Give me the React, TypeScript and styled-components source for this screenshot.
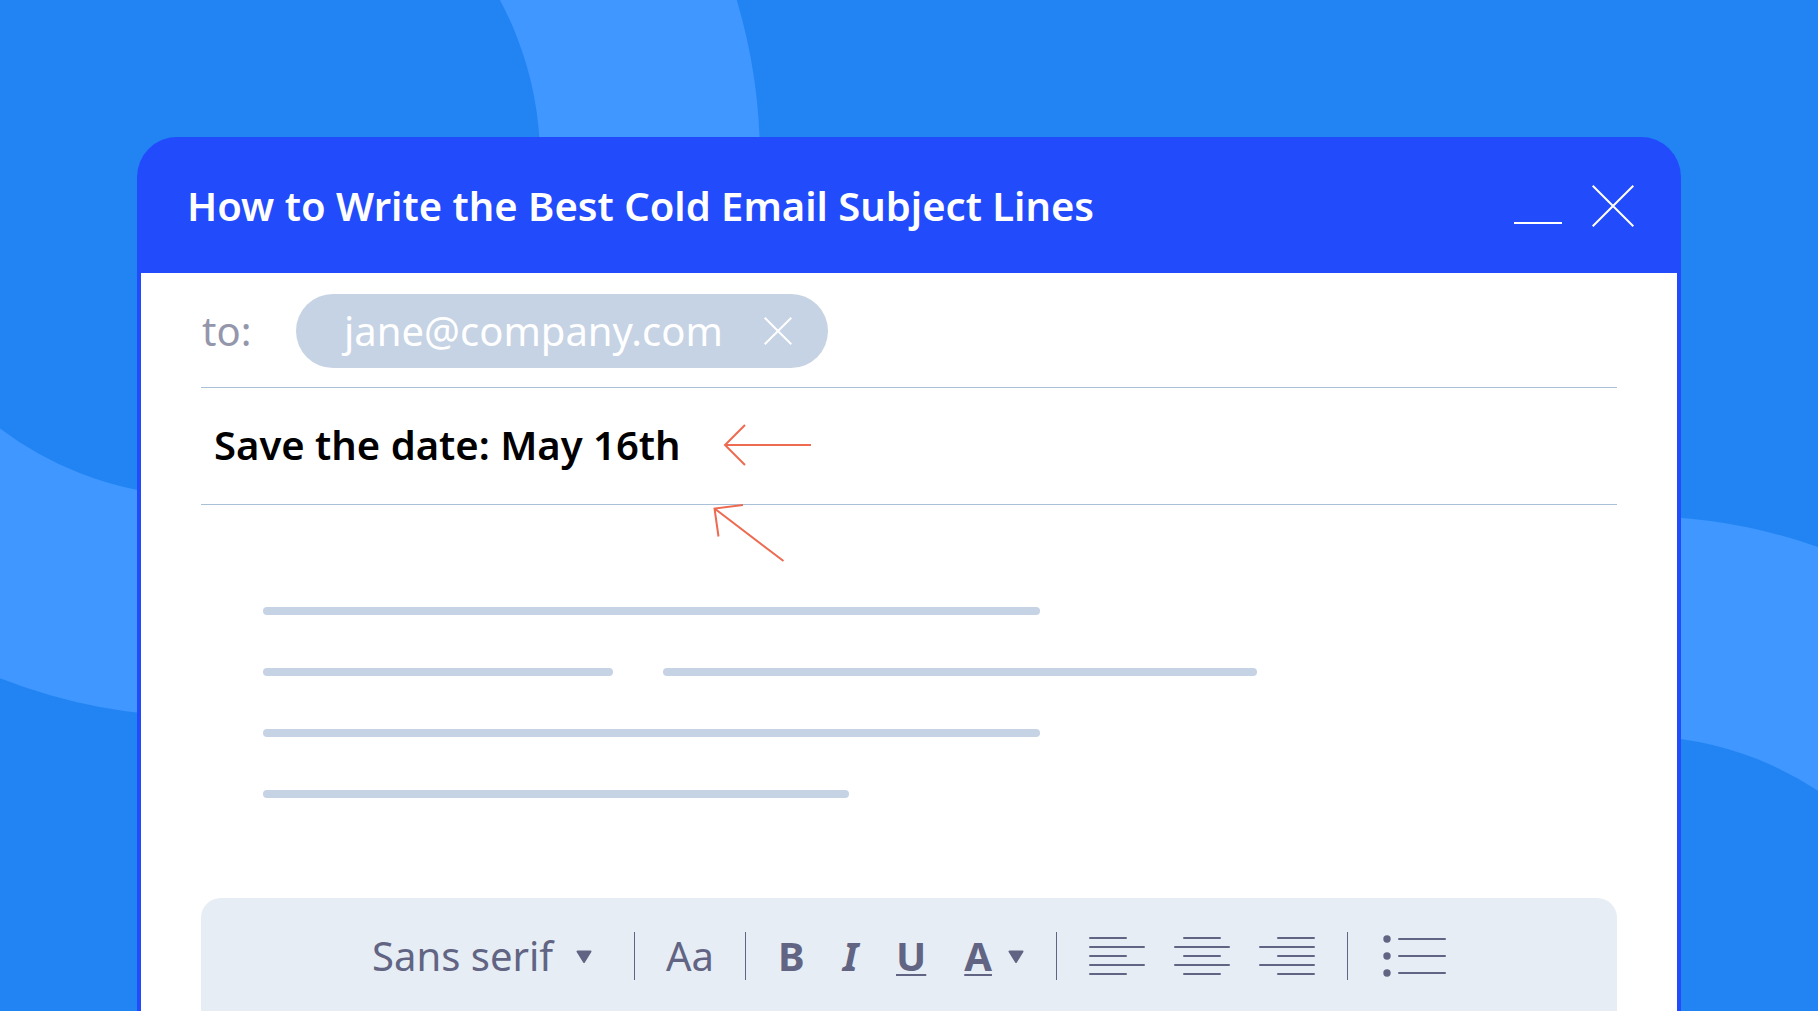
import React, { useState } from "react";
import styled, { createGlobalStyle, css } from "styled-components";

const color = {
  sky: "#2284f3",
  ring: "#3f97ff",
  brand: "#224bfc",
  white: "#ffffff",
  muted: "#9496ab",
  chip: "#c6d3e4",
  rule: "#a9c0d9",
  panel: "#e6edf5",
  ink: "#616482",
  accent: "#ee6a50",
};

const GlobalStyle = createGlobalStyle`
  *, *::before, *::after { box-sizing: border-box; }
  body {
    margin: 0;
    background: ${color.sky};
    font-family: "Noto Sans", "Open Sans", sans-serif;
  }
  button, input, select { font: inherit; color: inherit; }
`;

const Page = styled.div`
  position: relative;
  display: flex;
  min-height: 100vh;
  padding: 137px 137px 0;
  overflow: hidden;
`;

const Backdrop = styled.svg`
  position: absolute;
  inset: 0;
  width: 100%;
  height: 100%;
`;

const Window = styled.main`
  position: relative;
  display: flex;
  flex: 1;
  flex-direction: column;
  min-width: 0;
  border: solid ${color.brand};
  border-width: 0 4px;
  border-radius: 40px 40px 0 0;
  background: ${color.brand};
`;

const TitleBar = styled.header`
  display: flex;
  align-items: center;
  justify-content: space-between;
  height: 136px;
  padding: 2px 43px 0 46px;
  color: ${color.white};
`;

const Title = styled.h1`
  margin: 0;
  font-size: 40px;
  line-height: 56px;
  font-weight: 600;
`;

const WindowControls = styled.div`
  display: flex;
  align-items: center;
  gap: 30px;
`;

const PlainButton = styled.button`
  display: flex;
  align-items: center;
  padding: 0;
  border: 0;
  background: none;
  cursor: pointer;
`;

const Sheet = styled.form`
  display: flex;
  flex: 1;
  flex-direction: column;
  padding: 0 60px;
  background: ${color.white};
`;

const FieldRow = styled.div`
  display: flex;
  align-items: center;
  border-bottom: 1px solid ${color.rule};
`;

const RecipientRow = styled(FieldRow)`
  padding: 21px 0 19px 1px;
`;

const SubjectRow = styled(FieldRow)`
  position: relative;
  height: 117px;
  padding: 0 0 3px 13px;
`;

const ToLabel = styled.label`
  width: 94px;
  color: ${color.muted};
  font-size: 40px;
  line-height: 56px;
`;

const Chip = styled.span`
  display: flex;
  align-items: center;
  gap: 41px;
  height: 74px;
  padding: 0 36px 0 48px;
  border-radius: 37px;
  background: ${color.chip};
  color: ${color.white};
  font-size: 40px;
  line-height: 56px;
`;

const field = css`
  min-width: 0;
  padding: 0;
  border: 0;
  outline: 0;
  background: none;
  font-size: 40px;
  line-height: 56px;
`;

const RecipientInput = styled.input`
  ${field}
  flex: 1;
  padding-left: 24px;
  color: ${color.muted};
`;

const SubjectInput = styled.input`
  ${field}
  width: 509px;
  height: 56px;
  color: #000000;
  font-weight: 600;
`;

const BodyPointer = styled.svg`
  position: absolute;
  top: 114px;
  left: 511px;
`;

const Message = styled.div`
  display: flex;
  flex: 1;
  flex-direction: column;
  gap: 53px;
  padding: 102px 0 100px 62px;
`;

const TextLine = styled.div`
  display: flex;
  gap: 50px;
`;

const Bar = styled.span<{ $width: number }>`
  width: ${(p) => p.$width}px;
  height: 8px;
  border-radius: 4px;
  background: ${color.chip};
`;

const Toolbar = styled.div`
  display: flex;
  align-items: center;
  justify-content: center;
  gap: 31px;
  height: 113px;
  padding-top: 2px;
  border-radius: 20px 20px 0 0;
  background: ${color.panel};
  color: ${color.ink};
  font-size: 40px;
  line-height: 56px;
`;

const Divider = styled.span`
  width: 1px;
  height: 48px;
  background: ${color.ink};
`;

const FontPicker = styled.div`
  display: grid;
  grid-template-columns: 220px;
  align-items: center;
  padding-right: 11px;

  > * {
    grid-area: 1 / 1;
  }

  > svg {
    justify-self: end;
    pointer-events: none;
  }
`;

const FontSelect = styled.select`
  width: 100%;
  height: 56px;
  padding: 0;
  border: 0;
  outline: 0;
  appearance: none;
  background: none;
  line-height: 56px;
`;

const ToolGroup = styled.div<{ $gap: number }>`
  display: flex;
  align-items: center;
  gap: ${(p) => p.$gap}px;
  padding: 0 1px;
`;

const ToolButton = styled(PlainButton)<{
  $bold?: boolean;
  $italic?: boolean;
}>`
  gap: 16px;
  height: 56px;
  font-weight: ${(p) => (p.$bold ? 700 : 400)};
  font-style: ${(p) => (p.$italic ? "italic" : "normal")};
`;

const Underlined = styled.span`
  text-decoration: underline 2px;
  text-underline-offset: 3px;
  text-decoration-skip-ink: none;
`;

const Caret = () => (
  <svg width="16" height="16" viewBox="0 0 16 16" aria-hidden="true">
    <path
      d="M1.500 3.500h13L8 14z"
      fill={color.ink}
      stroke={color.ink}
      strokeWidth="2"
      strokeLinejoin="round"
    />
  </svg>
);

const Cross = ({ size }: { size: number }) => (
  <svg width={size} height={size} aria-hidden="true">
    <path
      d={`M.7 .7L${size - 0.7} ${size - 0.7}M${size - 0.7} .7L.7 ${size - 0.7}`}
      stroke={color.white}
      strokeWidth="2"
    />
  </svg>
);

type Align = "left" | "center" | "right";

const AlignIcon = ({ align }: { align: Align }) => {
  const start = { left: 1, center: 10, right: 19 }[align];
  return (
    <svg width="56" height="40" aria-hidden="true">
      <path
        d={`M${start} 2h36M1 11h54M${start} 20h36M1 29h54M${start} 38h36`}
        stroke={color.ink}
        strokeWidth="2"
        strokeLinecap="round"
      />
    </svg>
  );
};

const ListIcon = () => (
  <svg width="67" height="42" aria-hidden="true">
    {[4, 21, 38].map((y) => (
      <g key={y}>
        <circle cx="8" cy={y} r="3.7" fill={color.ink} />
        <path
          d={`M20 ${y}h46`}
          stroke={color.ink}
          strokeWidth="2"
          strokeLinecap="round"
        />
      </g>
    ))}
  </svg>
);

const lines = [[777], [350, 594], [777], [586]];
const alignments: Align[] = ["left", "center", "right"];

export default function App() {
  const [subject, setSubject] = useState("Save the date: May 16th");
  return (
    <>
      <GlobalStyle />
      <Page>
        <Backdrop
          viewBox="0 0 1818 1011"
          preserveAspectRatio="xMidYMid slice"
          aria-hidden="true"
        >
          <g fill="none" stroke={color.ring} strokeWidth="220">
            <circle cx="203" cy="159.500" r="447" />
            <circle cx="1636" cy="1065" r="439" />
          </g>
        </Backdrop>
        <Window>
          <TitleBar>
            <Title>How to Write the Best Cold Email Subject Lines</Title>
            <WindowControls>
              <PlainButton type="button" aria-label="Minimize">
                <svg width="49" height="42" aria-hidden="true">
                  <path d="M1 38h48" stroke={color.white} strokeWidth="2" />
                </svg>
              </PlainButton>
              <PlainButton type="button" aria-label="Close">
                <Cross size={42} />
              </PlainButton>
            </WindowControls>
          </TitleBar>
          <Sheet onSubmit={(e) => e.preventDefault()}>
            <RecipientRow>
              <ToLabel htmlFor="to">to:</ToLabel>
              <Chip>
                jane@company.com
                <PlainButton type="button" aria-label="Remove recipient">
                  <Cross size={28} />
                </PlainButton>
              </Chip>
              <RecipientInput id="to" type="text" />
            </RecipientRow>
            <SubjectRow>
              <SubjectInput
                type="text"
                aria-label="Subject"
                value={subject}
                onChange={(e) => setSubject(e.target.value)}
              />
              <svg width="90" height="44" aria-hidden="true">
                <path
                  d="M88 22H2M22 2L2 22l20 20"
                  fill="none"
                  stroke={color.accent}
                  strokeWidth="2"
                />
              </svg>
              <BodyPointer width="74" height="62" aria-hidden="true">
                <path
                  d="M71.500 59L2.500 6.500M31 3L2.500 6.500l4 28"
                  fill="none"
                  stroke={color.accent}
                  strokeWidth="2"
                />
              </BodyPointer>
            </SubjectRow>
            <Message>
              {lines.map((bars, i) => (
                <TextLine key={i}>
                  {bars.map((width, j) => (
                    <Bar key={j} $width={width} />
                  ))}
                </TextLine>
              ))}
            </Message>
            <Toolbar role="toolbar" aria-label="Formatting">
              <FontPicker>
                <FontSelect aria-label="Font">
                  <option>Sans serif</option>
                </FontSelect>
                <Caret />
              </FontPicker>
              <Divider />
              <ToolButton type="button" aria-label="Text size">
                Aa
              </ToolButton>
              <Divider />
              <ToolGroup $gap={38}>
                <ToolButton type="button" aria-label="Bold" $bold>
                  B
                </ToolButton>
                <ToolButton type="button" aria-label="Italic" $bold $italic>
                  I
                </ToolButton>
                <ToolButton type="button" aria-label="Underline" $bold>
                  <Underlined>U</Underlined>
                </ToolButton>
                <ToolButton type="button" aria-label="Text color" $bold>
                  <Underlined>A</Underlined>
                  <Caret />
                </ToolButton>
              </ToolGroup>
              <Divider />
              <ToolGroup $gap={29}>
                {alignments.map((align) => (
                  <ToolButton
                    key={align}
                    type="button"
                    aria-label={`Align ${align}`}
                  >
                    <AlignIcon align={align} />
                  </ToolButton>
                ))}
              </ToolGroup>
              <Divider />
              <ToolButton type="button" aria-label="Bulleted list">
                <ListIcon />
              </ToolButton>
            </Toolbar>
          </Sheet>
        </Window>
      </Page>
    </>
  );
}
